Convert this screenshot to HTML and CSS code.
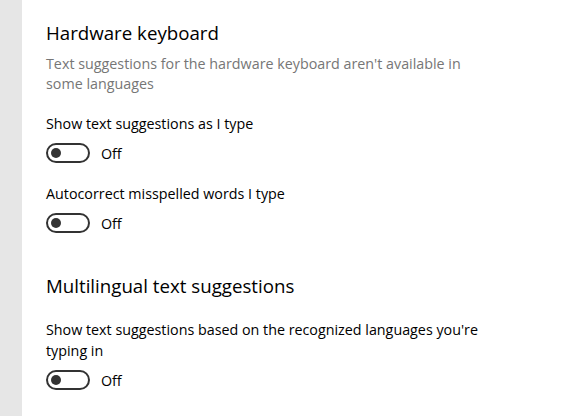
FILE: index.html
```html
<!DOCTYPE html>
<html>
<head>
<meta charset="utf-8">
<link rel="stylesheet" href="styles.css">
</head>
<body>
<div class="page">
  <div class="rail"></div>
  <main class="content">
    <h2 class="heading first">Hardware keyboard</h2>
    <p class="desc">Text suggestions for the hardware keyboard aren't available in some languages</p>
    <div class="setting">
      <div class="label">Show text suggestions as I type</div>
      <div class="toggle-row"><span class="toggle"><span class="knob"></span></span><span class="state">Off</span></div>
    </div>
    <div class="setting">
      <div class="label">Autocorrect misspelled words I type</div>
      <div class="toggle-row"><span class="toggle"><span class="knob"></span></span><span class="state">Off</span></div>
    </div>
    <h2 class="heading second">Multilingual text suggestions</h2>
    <div class="setting">
      <div class="label wide">Show text suggestions based on the recognized languages you're typing in</div>
      <div class="toggle-row"><span class="toggle"><span class="knob"></span></span><span class="state">Off</span></div>
    </div>
  </main>
</div>
</body>
</html>
```
FILE: styles.css
```css
html, body {
  margin: 0;
  padding: 0;
  background: #ffffff;
  height: 100%;
}
body {
  font-family: "Open Sans", "Noto Sans", sans-serif;
  color: #000;
  overflow: hidden;
}
.page {
  display: flex;
  height: 416px;
}
.rail {
  width: 22px;
  background: #e6e6e6;
  flex: none;
}
.content {
  padding-left: 24px;
  flex: 1;
}
.heading {
  font-weight: 400;
  font-size: 18.7px;
  line-height: 26px;
  margin: 0;
}
.heading.first {
  margin-top: 20px;
}
.heading.second {
  margin-top: 40px;
}
.desc {
  margin: 8px 0 0;
  width: 440px;
  font-size: 14.3px;
  line-height: 20px;
  color: #767676;
}
.setting {
  margin-top: 20px;
}
.setting + .setting {
  margin-top: 21px;
}
.label {
  font-size: 14.3px;
  line-height: 20px;
}
.label.wide {
  width: 460px;
  line-height: 21px;
}
.toggle-row {
  display: flex;
  align-items: center;
  margin-top: 9px;
  height: 20px;
}
.toggle {
  box-sizing: border-box;
  width: 44px;
  height: 20px;
  border: 2px solid #333;
  border-radius: 10px;
  display: flex;
  align-items: center;
  padding-left: 3px;
}
.knob {
  width: 10px;
  height: 10px;
  border-radius: 50%;
  background: #333;
}
.state {
  margin-left: 11px;
  font-size: 14.3px;
}
```
